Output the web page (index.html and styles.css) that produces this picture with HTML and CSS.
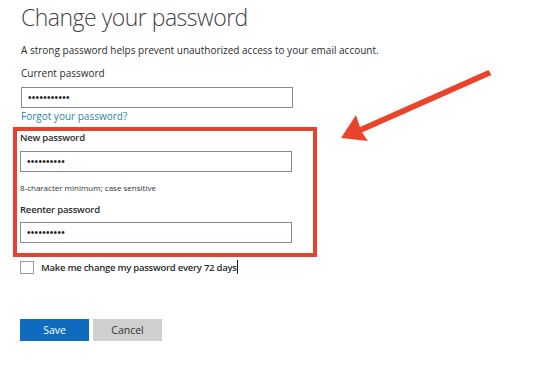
FILE: index.html
```html
<!DOCTYPE html>
<html lang="en">
<head>
    <meta charset="UTF-8">
    <meta name="viewport" content="width=device-width, initial-scale=1.0">
    <title>Change your password</title>
    <link rel="stylesheet" href="styles.css">
</head>
<body>
    <div class="page">
        <h1 class="title">Change your password</h1>
        <p class="intro">A strong password helps prevent unauthorized access to your email account.</p>

        <label class="field-label" for="current">Current password</label>
        <input class="text-input" id="current" type="password" value="12345678901">
        <a class="forgot" href="#">Forgot your password?</a>

        <div class="highlight">
            <label class="field-label strong" for="new">New password</label>
            <input class="text-input" id="new" type="password" value="1234567890">
            <div class="hint">8-character minimum; case sensitive</div>
            <label class="field-label strong second" for="again">Reenter password</label>
            <input class="text-input tight" id="again" type="password" value="1234567890">
        </div>

        <label class="check-row">
            <span class="check-box"></span>
            <span class="check-text">Make me change my password every 72 days</span><span class="caret"></span>
        </label>

        <div class="actions">
            <button class="btn btn-primary">Save</button>
            <button class="btn btn-secondary">Cancel</button>
        </div>
    </div>

    <!-- annotation arrow -->
    <svg class="arrow" width="533" height="375" viewBox="0 0 533 375">
        <path d="M488.5,70 L491.5,75 L362,132.5 L368,141 L341,138 L356,115 L360,127 Z" fill="#e9442b"/>
    </svg>
</body>
</html>
```

FILE: styles.css
```css
* {
    margin: 0;
    padding: 0;
    box-sizing: border-box;
}

body {
    background: #ffffff;
    font-family: 'Open Sans', 'Noto Sans', sans-serif;
    color: #2b2b2b;
    width: 533px;
    height: 375px;
    overflow: hidden;
    position: relative;
}

.page {
    display: flex;
    flex-direction: column;
    align-items: flex-start;
    padding-left: 21px;
}

/* Titre */
.title {
    font-size: 23px;
    font-weight: 300;
    letter-spacing: -0.5px;
    line-height: 36px;
    margin-top: -1px;
    color: #444;
    margin-bottom: 7px;
}

.intro {
    font-size: 10px;
    line-height: 16px;
}

.field-label {
    font-size: 10px;
    line-height: 16px;
    margin-top: 7px;
}

.field-label.strong {
    font-size: 9.5px;
    font-weight: 600;
    letter-spacing: -0.2px;
    line-height: 14px;
    margin-top: 0;
}

.field-label.second {
    margin-top: 9px;
}

.text-input {
    width: 272px;
    height: 21px;
    margin-top: 6px;
    border: 1px solid #8a8a8a;
    padding: 0 6px;
    font-size: 10px;
    letter-spacing: 0.3px;
    color: #222;
    outline: none;
}

.text-input.tight {
    margin-top: 5px;
}

.forgot {
    font-size: 10px;
    line-height: 14px;
    margin-top: 1px;
    color: #2a86a6;
    text-decoration: none;
}

/* Cadre rouge */
.highlight {
    display: flex;
    flex-direction: column;
    align-items: flex-start;
    width: 304px;
    margin-top: 4px;
    margin-left: -8px;
    border: 4px solid #e4432d;
    padding: 0 21px 10px 3px;
}

.hint {
    font-size: 8px;
    line-height: 12px;
    margin-top: 10px;
    color: #333;
}

/* Case a cocher */
.check-row {
    display: flex;
    align-items: center;
    height: 16px;
    margin-top: 2px;
    margin-left: -1px;
}

.check-box {
    width: 14px;
    height: 13px;
    border: 1px solid #9a9a9a;
    background: #fff;
}

.check-text {
    margin-left: 7px;
    font-size: 9.5px;
    font-weight: 600;
    letter-spacing: -0.25px;
}

.caret {
    width: 1px;
    height: 14px;
    background: #222;
}

/* Boutons */
.actions {
    display: flex;
    gap: 4px;
    margin-top: 44px;
    margin-left: -1px;
}

.btn {
    width: 69px;
    height: 22px;
    border: none;
    font-family: 'Open Sans', 'Noto Sans', sans-serif;
    font-size: 10.5px;
}

.btn-primary {
    background: #0f6bbd;
    color: #fff;
}

.btn-secondary {
    background: #cfcfcf;
    color: #333;
}

.arrow {
    position: absolute;
    left: 0;
    top: 0;
    pointer-events: none;
}
```
